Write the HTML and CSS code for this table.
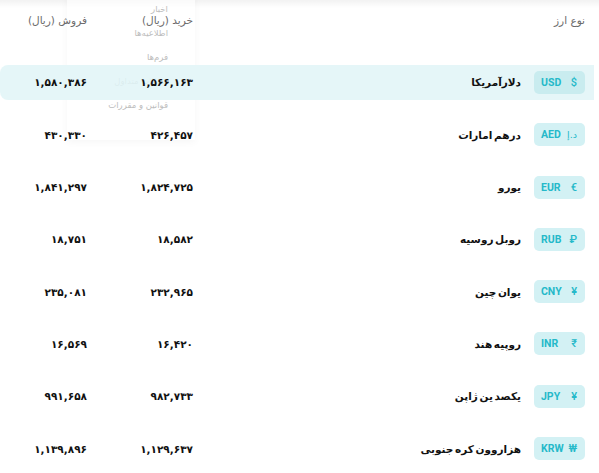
FILE: index.html
```html
<!DOCTYPE html>
<html lang="fa" dir="rtl">
<head>
<meta charset="utf-8">
<link rel="stylesheet" href="styles.css">
</head>
<body>
<div class="page">
  <div class="topshade"></div>
  <div class="menu">
    <div class="menu-item">اخبار</div>
    <div class="menu-item">اطلاعیه‌ها</div>
    <div class="menu-item">فرم‌ها</div>
    <div class="menu-item">سوالات متداول</div>
    <div class="menu-item">قوانین و مقررات</div>
  </div>
  <div class="table">
    <div class="row head">
      <div class="cell">نوع ارز</div>
      <div class="cell">خرید (ریال)</div>
      <div class="cell">فروش (ریال)</div>
    </div>
    <div class="row active">
      <div class="cell type"><span class="badge"><span class="sym">$</span><span class="code">USD</span></span><span class="name">دلارآمریکا</span></div>
      <div class="cell num">۱,۵۶۶,۱۶۳</div>
      <div class="cell num">۱,۵۸۰,۳۸۶</div>
    </div>
    <div class="row">
      <div class="cell type"><span class="badge"><span class="sym ar">د.إ</span><span class="code">AED</span></span><span class="name">درهم امارات</span></div>
      <div class="cell num">۴۲۶,۴۵۷</div>
      <div class="cell num">۴۳۰,۳۳۰</div>
    </div>
    <div class="row">
      <div class="cell type"><span class="badge"><span class="sym">€</span><span class="code">EUR</span></span><span class="name">یورو</span></div>
      <div class="cell num">۱,۸۲۴,۷۲۵</div>
      <div class="cell num">۱,۸۴۱,۲۹۷</div>
    </div>
    <div class="row">
      <div class="cell type"><span class="badge"><span class="sym">₽</span><span class="code">RUB</span></span><span class="name">روبل روسیه</span></div>
      <div class="cell num">۱۸,۵۸۲</div>
      <div class="cell num">۱۸,۷۵۱</div>
    </div>
    <div class="row">
      <div class="cell type"><span class="badge"><span class="sym">¥</span><span class="code">CNY</span></span><span class="name">یوان چین</span></div>
      <div class="cell num">۲۳۲,۹۶۵</div>
      <div class="cell num">۲۳۵,۰۸۱</div>
    </div>
    <div class="row">
      <div class="cell type"><span class="badge"><span class="sym">₹</span><span class="code">INR</span></span><span class="name">روپیه هند</span></div>
      <div class="cell num">۱۶,۴۲۰</div>
      <div class="cell num">۱۶,۵۶۹</div>
    </div>
    <div class="row">
      <div class="cell type"><span class="badge"><span class="sym">¥</span><span class="code">JPY</span></span><span class="name">یکصد ین ژاپن</span></div>
      <div class="cell num">۹۸۲,۷۳۳</div>
      <div class="cell num">۹۹۱,۶۵۸</div>
    </div>
    <div class="row">
      <div class="cell type"><span class="badge"><span class="sym">₩</span><span class="code">KRW</span></span><span class="name">هزاروون کره جنوبی</span></div>
      <div class="cell num">۱,۱۲۹,۶۳۷</div>
      <div class="cell num">۱,۱۳۹,۸۹۶</div>
    </div>
  </div>
</div>
</body>
</html>
```
FILE: styles.css
```css
* { box-sizing: border-box; }
html, body { margin: 0; padding: 0; background: #fff; }
body {
  font-family: "DejaVu Sans", "Noto Sans", sans-serif;
  color: #111;
  width: 599px;
  height: 473px;
  overflow: hidden;
}
.page { position: relative; width: 599px; height: 473px; }
.topshade {
  position: absolute; top: 0; left: 0; right: 0; height: 8px;
  background: linear-gradient(to bottom, rgba(0,0,0,0.05), rgba(0,0,0,0));
}
.menu {
  position: absolute;
  top: -6px; left: 67px; width: 128px; height: 146px;
  background: rgba(255,255,255,0.6);
  box-shadow: 0 2px 8px rgba(0,0,0,0.04);
  padding: 8px 27px 0 0;
  display: flex; flex-direction: column; align-items: flex-start;
  gap: 10px;
  z-index: 0;
}
.menu-item {
  font-size: 8.5px;
  line-height: 14px;
  color: #bdbdbd;
  white-space: nowrap;
}
.table {
  position: relative; z-index: 1;
  width: 594px;
  margin-right: 5px;
  display: flex; flex-direction: column;
  gap: 17.3px;
}
.row {
  display: grid;
  grid-template-columns: 1fr 106px 96px;
  align-items: center;
  height: 35px;
}
.row.head {
  height: 40px;
  margin-bottom: 7.7px;
  font-size: 10.5px;
  color: #6b6b6b;
}
.row.active {
  background: rgba(225, 245, 247, 0.85);
  border-radius: 8px 0 0 8px;
}
.cell { padding-right: 9px; text-align: right; white-space: nowrap; }
.type { display: flex; align-items: center; gap: 13px; }
.badge {
  display: flex; align-items: center; justify-content: space-between;
  width: 51px; height: 23px;
  padding: 0 8px 0 7px;
  background: #d3f1f4;
  border-radius: 5px;
  color: #25b9c9;
  font-family: "Roboto", "Liberation Sans", sans-serif;
  font-weight: 700;
  font-size: 10.5px;
}
.row.active .badge { background: #c9ecef; }
.sym { font-weight: 500; font-size: 11px; }
.sym.ar { font-family: "DejaVu Sans", sans-serif; font-size: 9.5px; font-weight: 400; }
.name { font-weight: 700; font-size: 10.5px; word-spacing: -2px; color: #111; }
.num { font-weight: 700; font-size: 10.5px; letter-spacing: -0.9px; color: #111; }
```
